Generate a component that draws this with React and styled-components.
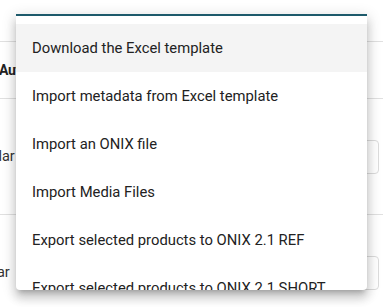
import styled, { createGlobalStyle } from "styled-components";

const GlobalStyle = createGlobalStyle`
  html, body {
    margin: 0;
    padding: 0;
    background: #fff;
    font-family: Roboto, "Liberation Sans", sans-serif;
  }
`;

const items = [
  "Download the Excel template",
  "Import metadata from Excel template",
  "Import an ONIX file",
  "Import Media Files",
  "Export selected products to ONIX 2.1 REF",
  "Export selected products to ONIX 2.1 SHORT",
  "Export selected products to ONIX 3.0",
];

const rows = ["Popular", "Similar"];

const App = () => {
  return (
    <Page>
      <GlobalStyle />
      <Table>
        <Spacer />
        <HeaderRow>
          <HeaderCell>Author</HeaderCell>
        </HeaderRow>
        {rows.map((r) => (
          <Row key={r}>
            <Cell>{r}</Cell>
            <Actions>
              <ActionBox />
              <ActionBox />
            </Actions>
          </Row>
        ))}
      </Table>
      <Menu>
        <MenuList>
          {items.map((label, i) => (
            <MenuItem key={label} $active={i === 0}>
              {label}
            </MenuItem>
          ))}
        </MenuList>
      </Menu>
    </Page>
  );
};

const Page = styled.div`
  position: relative;
  width: 383px;
  height: 307px;
  overflow: hidden;
  background: #fff;
`;

const Table = styled.div`
  display: flex;
  flex-direction: column;
`;

const Spacer = styled.div`
  height: 41px;
`;

const HeaderRow = styled.div`
  height: 56px;
  display: flex;
  align-items: center;
  border-top: 1px solid #e0e0e0;
  border-bottom: 1px solid #e0e0e0;
`;

const HeaderCell = styled.div`
  font-size: 14px;
  font-weight: 700;
  letter-spacing: -0.3px;
  color: #222;
  margin-left: -1px;
`;

const Row = styled.div`
  height: 116px;
  display: flex;
  align-items: center;
  justify-content: space-between;
  border-bottom: 1px solid #e0e0e0;
  box-sizing: border-box;
`;

const Cell = styled.div`
  font-size: 14.5px;
  color: #333;
  margin-left: -35px;
  width: 60px;
`;

const Actions = styled.div`
  display: flex;
  gap: 4px;
  margin-right: -40px;
`;

const ActionBox = styled.div`
  width: 40px;
  height: 34px;
  box-sizing: border-box;
  border: 1px solid #dcdcdc;
  border-radius: 4px;
  background: #fff;
`;

const Menu = styled.div`
  position: absolute;
  top: 14px;
  left: 16px;
  width: 351px;
  height: 276px;
  box-sizing: border-box;
  background: #fff;
  border-top: 2px solid #1d5a6b;
  border-radius: 0 0 4px 4px;
  overflow: hidden;
  box-shadow: 0px 5px 5px -3px rgba(0, 0, 0, 0.2),
    0px 8px 10px 1px rgba(0, 0, 0, 0.14),
    0px 3px 14px 2px rgba(0, 0, 0, 0.12);
`;

const MenuList = styled.ul`
  list-style: none;
  margin: 0;
  padding: 8px 0;
`;

const MenuItem = styled.li`
  height: 48px;
  display: flex;
  align-items: center;
  padding: 0 16px;
  font-size: 14.8px;
  color: #222;
  white-space: nowrap;
  background: ${({ $active }) => ($active ? "#f4f4f4" : "transparent")};
`;

export default App;
